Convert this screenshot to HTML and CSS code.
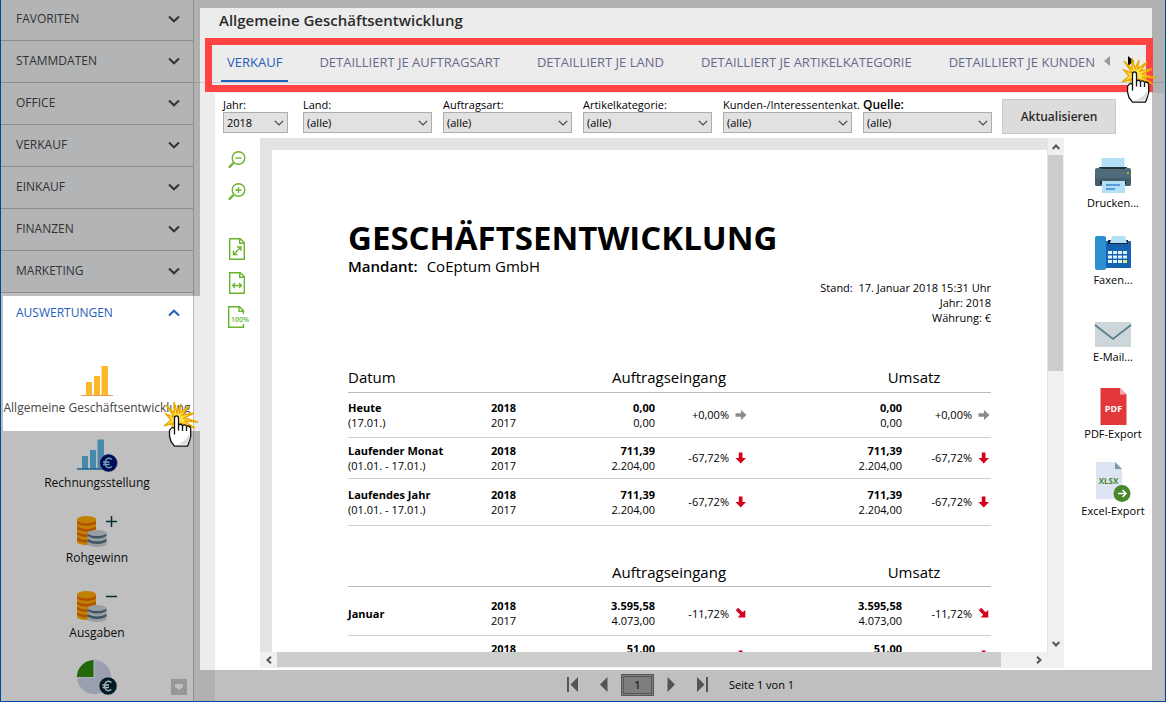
FILE: index.html
```html
<!DOCTYPE html>
<html lang="de">
<head>
<meta charset="utf-8">
<title>Allgemeine Geschäftsentwicklung</title>
<link rel="stylesheet" href="styles.css">
</head>
<body>
<svg class="defs" aria-hidden="true">
  <symbol id="chevron" viewBox="0 0 12 8"><path d="M1 1.5L6 6.3L11 1.5" fill="none" stroke="currentColor" stroke-width="2"/></symbol>
  <symbol id="caret" viewBox="0 0 10 6"><path d="M.8.8L5 5L9.200.8" fill="none" stroke="currentColor" stroke-width="1.200"/></symbol>
  <symbol id="tick" viewBox="0 0 8 6"><path d="M.7 5L4 1.500L7.300 5" fill="none" stroke="currentColor" stroke-width="2"/></symbol>
  <symbol id="coins" viewBox="0 0 30 31">
    <path d="M0 3v23a9.500 3 0 0 0 19 0V3z" fill="#ffae08"/>
    <path d="M0 5q9.500 5 19 0v2.600q-9.500 5-19 0zM0 10.500q9.500 5 19 0v2.600q-9.500 5-19 0zM0 16q9.500 5 19 0v2.600q-9.500 5-19 0zM0 21.500q9.500 5 19 0v2.600q-9.500 5-19 0z" fill="#ef6a00"/>
    <ellipse cx="9.500" cy="3" rx="9.500" ry="3" fill="#ffae08"/>
    <path d="M10.500 17v11a9.500 3 0 0 0 19 0V17z" fill="#c8d3da"/>
    <path d="M10.500 17.500q9.500 5 19 0v2.600q-9.500 5-19 0zM10.500 23q9.500 5 19 0v2.600q-9.500 5-19 0z" fill="#527182"/>
    <ellipse cx="20" cy="17" rx="9.500" ry="3" fill="#c8d3da"/>
  </symbol>
  <symbol id="arrow-flat" viewBox="0 0 12 12"><path d="M.5 4.200H6V1l5.500 5L6 11V7.800H.5z" fill="#8a8a8a"/></symbol>
  <symbol id="arrow-down" viewBox="0 0 12 12"><path d="M3.800.5h3.700V6H11L5.700 11.500.5 6h3.300z" fill="#d6001c"/></symbol>
  <symbol id="arrow-slope" viewBox="0 0 12 12"><path d="M3.200.8L7.600 5.200 10.300 3v7.500H2.800L5.200 7.700.8 3.200z" fill="#d6001c"/></symbol>
  <symbol id="pointer" viewBox="0 0 38 48">
    <path d="M14 18L5 5L13 13L13 2L16 13L20 4L18.500 13L28 6L21 15L33 13L23 18L37 22L23 21L34 28L20 23L10 31L12 23L3 26L10 20L5 14L13 17z" fill="#ffe14d" stroke="#eda900" stroke-width="1.400"/>
    <path d="M13.500 34V18q0-2.200 2-2.200t2 2.200v7q2.200-1.800 4 .6 2.200-1.600 4 .6 3.500-.8 4.200 2.200v8l-1.400 5-1.800 4.800H13.500L10 41.500 8.500 36v-5.500q2.500-4.500 5-2z" fill="#fff" stroke="#111" stroke-width="1.300" stroke-linejoin="round"/>
    <path d="M17.500 25v5.500M21.500 25.500V31M25.500 26.500V31" stroke="#111" stroke-width="1.300" fill="none"/>
    <path d="M28.500 34v5l-3 5.500H15q8-1 13.500-10.500z" fill="#ddd"/>
  </symbol>
</svg>

<div class="app">
  <nav class="sidebar" aria-label="Hauptmenü">
    <button class="section">FAVORITEN<svg><use href="#chevron"/></svg></button>
    <button class="section">STAMMDATEN<svg><use href="#chevron"/></svg></button>
    <button class="section">OFFICE<svg><use href="#chevron"/></svg></button>
    <button class="section">VERKAUF<svg><use href="#chevron"/></svg></button>
    <button class="section">EINKAUF<svg><use href="#chevron"/></svg></button>
    <button class="section">FINANZEN<svg><use href="#chevron"/></svg></button>
    <button class="section">MARKETING<svg><use href="#chevron"/></svg></button>
    <button class="section open">AUSWERTUNGEN<svg><use href="#chevron"/></svg></button>
    <div class="reports">
      <a class="report-link current" href="#">
        <svg width="42" height="36" viewBox="0 0 42 36"><path d="M10 19h6v13h-6zM18 13h6v19h-6zM25.500 3H32v29h-6.500z" fill="#fdb72b"/><path d="M5 32.500h32" stroke="#ee9a4d"/></svg>
        <span>Allgemeine Geschäftsentwicklung</span></a>
      <a class="report-link" href="#">
        <svg width="42" height="36" viewBox="0 0 42 36"><path d="M6 18h6v13H6zM14 12h6v19h-6zM21.500 1.500H28V31h-6.500z" fill="#5fb8e6"/><path d="M1 31h28" stroke="#2484b8" stroke-width="1.500"/><circle cx="32.500" cy="25" r="9" fill="#000f75" stroke="#d0dcec" stroke-width=".6"/><path d="M36 21.500q-4.500-3-6.500 1.200-1 2.300 0 4.600 2 4.200 6.500 1.200M27 24h6.500M27 26.500h6.500" fill="none" stroke="#9be0fa" stroke-width="1.300"/></svg>
        <span>Rechnungsstellung</span></a>
      <a class="report-link" href="#">
        <svg width="42" height="36" viewBox="0 0 42 36"><use href="#coins" x="1" y="3" width="30" height="31"/><path d="M30 8.500h11M35.500 3v11" stroke="#0b3947" stroke-width="1.500"/></svg>
        <span>Rohgewinn</span></a>
      <a class="report-link" href="#">
        <svg width="42" height="36" viewBox="0 0 42 36"><use href="#coins" x="1" y="3" width="30" height="31"/><path d="M30 8.500h11" stroke="#0b3947" stroke-width="1.500"/></svg>
        <span>Ausgaben</span></a>
      <a class="report-link" href="#" aria-label="Weitere Auswertung">
        <svg width="42" height="36" viewBox="0 0 42 36"><circle cx="18" cy="14" r="17" fill="#ccd5e8"/><path d="M18-4v18H0" fill="none" stroke="#e6ebf5" stroke-width="2"/><path d="M17.500-3v17H1A17 17 0 0 1 17.500-3z" fill="#2f8a0c"/><circle cx="32" cy="23" r="9" fill="#062532" stroke="#d0dcec" stroke-width=".6"/><path d="M35.500 19.500q-4.500-3-6.500 1.200-1 2.300 0 4.600 2 4.200 6.500 1.200M26.500 22h6.500M26.500 24.500H33" fill="none" stroke="#e8f4fa" stroke-width="1.300"/></svg></a>
    </div>
    <button class="more" aria-label="Mehr"><svg width="8" height="6" viewBox="0 0 8 6"><path d="M0 0h8v3L4 6 0 3z" fill="#fff"/></svg></button>
  </nav>

  <main class="main">
    <header class="head">
      <h1>Allgemeine Geschäftsentwicklung</h1>
      <div class="tabbar">
        <div class="tabs" role="tablist">
          <button class="tab active" role="tab" aria-selected="true">VERKAUF</button>
          <button class="tab" role="tab">DETAILLIERT JE AUFTRAGSART</button>
          <button class="tab" role="tab">DETAILLIERT JE LAND</button>
          <button class="tab" role="tab">DETAILLIERT JE ARTIKELKATEGORIE</button>
          <button class="tab" role="tab">DETAILLIERT JE KUNDEN</button>
        </div>
        <div class="tab-scroll">
          <button aria-label="Zurück"><svg width="6" height="10" viewBox="0 0 6 10"><path d="M6 0v10L0 5z" fill="#999"/></svg></button>
          <button aria-label="Weiter"><svg width="6" height="10" viewBox="0 0 6 10"><path d="M0 0v10l6-5z" fill="#000"/></svg></button>
        </div>
      </div>
    </header>

    <div class="panel">
      <form class="filters">
        <div class="field year"><label for="f1">Jahr:</label><div class="pick"><select id="f1"><option>2018</option></select><svg><use href="#caret"/></svg></div></div>
        <div class="field"><label for="f2">Land:</label><div class="pick"><select id="f2"><option>(alle)</option></select><svg><use href="#caret"/></svg></div></div>
        <div class="field"><label for="f3">Auftragsart:</label><div class="pick"><select id="f3"><option>(alle)</option></select><svg><use href="#caret"/></svg></div></div>
        <div class="field"><label for="f4">Artikelkategorie:</label><div class="pick"><select id="f4"><option>(alle)</option></select><svg><use href="#caret"/></svg></div></div>
        <div class="field"><label for="f5">Kunden-/Interessentenkat.</label><div class="pick"><select id="f5"><option>(alle)</option></select><svg><use href="#caret"/></svg></div></div>
        <div class="field"><label class="strong" for="f6">Quelle:</label><div class="pick"><select id="f6"><option>(alle)</option></select><svg><use href="#caret"/></svg></div></div>
        <button class="refresh" type="button">Aktualisieren</button>
      </form>

      <div class="work">
        <div class="zoombar">
          <button aria-label="Verkleinern"><svg width="24" height="20" viewBox="0 0 24 20"><circle cx="13.500" cy="8" r="6.300" fill="none" stroke="#6ab42d" stroke-width="1.400"/><path d="M8.500 13L4 17.500" stroke="#6ab42d" stroke-width="2.400"/><path d="M10.500 8h6" stroke="#6ab42d" stroke-width="1.300"/></svg></button>
          <button aria-label="Vergrößern"><svg width="24" height="20" viewBox="0 0 24 20"><circle cx="13.500" cy="8" r="6.300" fill="none" stroke="#6ab42d" stroke-width="1.400"/><path d="M8.500 13L4 17.500" stroke="#6ab42d" stroke-width="2.400"/><path d="M10.500 8h6M13.500 5v6" stroke="#6ab42d" stroke-width="1.300"/></svg></button>
          <button class="fit" aria-label="Ganze Seite"><svg width="24" height="22" viewBox="0 0 24 22"><path d="M4.700.7h10.600l4 4v16.600H4.700zM14.700.7v4.500h4.600" fill="none" stroke="#6ab42d" stroke-width="1.400"/><path d="M9 16l6.500-6.500M11.800 9H16v4M8.500 12.500v4h4" fill="none" stroke="#6ab42d" stroke-width="1.300"/></svg></button>
          <button aria-label="Seitenbreite"><svg width="24" height="22" viewBox="0 0 24 22"><path d="M4.700.7h10.600l4 4v16.600H4.700zM14.700.7v4.500h4.600" fill="none" stroke="#6ab42d" stroke-width="1.400"/><path d="M7.500 13.500h9M10 11l-2.500 2.500L10 16M14 11l2.500 2.500L14 16" fill="none" stroke="#6ab42d" stroke-width="1.300"/></svg></button>
          <button aria-label="100 Prozent"><svg width="24" height="22" viewBox="0 0 24 22"><path d="M18.500 8V4.500L14.500.7H3.700v20.600h14.800V18M14 .7v4.500h4.500" fill="none" stroke="#6ab42d" stroke-width="1.400"/><text x="6" y="16" class="pct-icon">100%</text></svg></button>
        </div>

        <div class="viewer">
          <div class="canvas">
            <article class="page">
              <h2>GESCHÄFTSENTWICKLUNG</h2>
              <p class="client"><b>Mandant:</b><span>CoEptum GmbH</span></p>
              <div class="meta"><p>Stand: &nbsp;17. Januar 2018 15:31 Uhr</p><p>Jahr: 2018</p><p>Währung: €</p></div>
              <table>
                <colgroup><col class="c-date"><col class="c-year"><col class="c-a1"><col class="c-p1"><col class="c-i1"><col class="c-gap"><col class="c-a2"><col class="c-p2"><col class="c-i2"></colgroup>
                <thead><tr><th class="left" colspan="2">Datum</th><th colspan="3">Auftragseingang</th><th></th><th colspan="3">Umsatz</th></tr></thead>
                <tbody>
                  <tr class="r1"><td><b>Heute</b><br>(17.01.)</td><td><b>2018</b><br>2017</td><td class="num"><b>0,00</b><br>0,00</td><td class="num">+0,00%</td><td class="ico"><svg><use href="#arrow-flat"/></svg></td><td></td><td class="num"><b>0,00</b><br>0,00</td><td class="num">+0,00%</td><td class="ico"><svg><use href="#arrow-flat"/></svg></td></tr>
                  <tr class="r2"><td><b>Laufender Monat</b><br>(01.01. - 17.01.)</td><td><b>2018</b><br>2017</td><td class="num"><b>711,39</b><br>2.204,00</td><td class="num">-67,72%</td><td class="ico"><svg><use href="#arrow-down"/></svg></td><td></td><td class="num"><b>711,39</b><br>2.204,00</td><td class="num">-67,72%</td><td class="ico"><svg><use href="#arrow-down"/></svg></td></tr>
                  <tr class="r3"><td><b>Laufendes Jahr</b><br>(01.01. - 17.01.)</td><td><b>2018</b><br>2017</td><td class="num"><b>711,39</b><br>2.204,00</td><td class="num">-67,72%</td><td class="ico"><svg><use href="#arrow-down"/></svg></td><td></td><td class="num"><b>711,39</b><br>2.204,00</td><td class="num">-67,72%</td><td class="ico"><svg><use href="#arrow-down"/></svg></td></tr>
                </tbody>
              </table>
              <table class="months">
                <colgroup><col class="c-date"><col class="c-year"><col class="c-a1"><col class="c-p1"><col class="c-i1"><col class="c-gap"><col class="c-a2"><col class="c-p2"><col class="c-i2"></colgroup>
                <thead><tr><th colspan="2"></th><th colspan="3">Auftragseingang</th><th></th><th colspan="3">Umsatz</th></tr></thead>
                <tbody>
                  <tr class="r4"><td><b>Januar</b></td><td><b>2018</b><br>2017</td><td class="num"><b>3.595,58</b><br>4.073,00</td><td class="num">-11,72%</td><td class="ico"><svg><use href="#arrow-slope"/></svg></td><td></td><td class="num"><b>3.595,58</b><br>4.073,00</td><td class="num">-11,72%</td><td class="ico"><svg><use href="#arrow-slope"/></svg></td></tr>
                  <tr class="r2 cut"><td></td><td><b>2018</b></td><td class="num"><b>51,00</b></td><td></td><td class="ico"><svg><use href="#arrow-down"/></svg></td><td></td><td class="num"><b>51,00</b></td><td></td><td class="ico"><svg><use href="#arrow-down"/></svg></td></tr>
                </tbody>
              </table>
            </article>
          </div>
          <div class="vbar"><span class="arrow"><svg><use href="#tick"/></svg></span><span class="thumb"></span><span class="rest"></span><span class="arrow down"><svg><use href="#tick"/></svg></span></div>
          <div class="hbar"><span class="arrow prev"><svg><use href="#tick"/></svg></span><span class="thumb"></span><span class="rest"></span><span class="arrow next"><svg><use href="#tick"/></svg></span></div>
        </div>

        <div class="exports">
          <button><svg width="38" height="38" viewBox="0 0 38 38"><path d="M7.500 1h23v12h-23z" fill="#b3dff7"/><path d="M5 10h28v4H5z" fill="#263238"/><path d="M1 13q0-2 2-2h4v1h24v-1h4q2 0 2 2v14q0 2-2 2H3q-2 0-2-2z" fill="#4f6b79"/><path d="M1 21h36v6q0 2-2 2H3q-2 0-2-2z" fill="#455d69"/><path d="M6 24h26v3H6z" fill="#1f2b31"/><path d="M8 24h23v12H8z" fill="#b3dff7"/><path d="M12 28h14M12 32h9" stroke="#3d87c9" stroke-width="1.500"/><path d="M33 15h2v2h-2z" fill="#8bc926"/></svg><span>Drucken...</span></button>
          <button><svg width="38" height="38" viewBox="0 0 38 38"><path d="M10 7h26q1 0 1 1v25q0 1-1 1H10z" fill="#1562b0"/><path d="M14 6h20v4H14z" fill="#10253c"/><path d="M18 2h13l2 7H16z" fill="#b3dff7"/><rect x="1" y="2" width="11" height="34" rx="2" fill="#2e8fd0"/><path d="M14 17h4v3h-4zM19 17h4v3h-4zM24 17h4v3h-4zM29 17h4v3h-4zM14 21.500h4v3h-4zM19 21.500h4v3h-4zM24 21.500h4v3h-4zM29 21.500h4v3h-4zM14 26h4v3h-4zM19 26h4v3h-4zM24 26h4v3h-4z" fill="#e3f2fb"/><path d="M29 26h4v3h-4z" fill="#e8ee79"/></svg><span>Faxen...</span></button>
          <button><svg width="38" height="38" viewBox="0 0 38 38"><path d="M1 11h36v25H1z" fill="#cdd7db"/><path d="M1 14l18 14 18-14" fill="none" stroke="#557c8b" stroke-width="1.600"/></svg><span>E-Mail...</span></button>
          <button><svg width="38" height="38" viewBox="0 0 38 38"><path d="M6.500 0H26l6.500 6.500V37h-26z" fill="#e2373b"/><path d="M26 0v6.500h6.500z" fill="#f3a9aa"/><text x="19.500" y="24" class="pdf-icon">PDF</text></svg><span>PDF-Export</span></button>
          <button><svg width="38" height="38" viewBox="0 3 38 38"><path d="M2 0h19l7 7v30H2z" fill="#dce4f2"/><path d="M21 0v7h7z" fill="#7c9aa9"/><text x="14.500" y="22" class="xls-icon">XLSX</text><circle cx="28" cy="31.500" r="8.500" fill="#48872a"/><path d="M24 31.500h7.500M28.500 28l3.500 3.500-3.500 3.500" fill="none" stroke="#fff" stroke-width="1.500"/></svg><span>Excel-Export</span></button>
        </div>
      </div>

      <footer class="pager">
        <button aria-label="Erste Seite"><svg width="12" height="16" viewBox="0 0 12 16"><path d="M0 0h2v15H0zM11 0v15L3.500 7.500z" fill="#707070"/></svg></button>
        <button aria-label="Vorherige Seite"><svg width="8" height="16" viewBox="0 0 8 16"><path d="M7.500 0v15L0 7.500z" fill="#707070"/></svg></button>
        <button class="page-no">1</button>
        <button aria-label="Nächste Seite"><svg width="8" height="16" viewBox="0 0 8 16"><path d="M.5 0v15L8 7.500z" fill="#707070"/></svg></button>
        <button class="last" aria-label="Letzte Seite"><svg width="12" height="16" viewBox="0 0 12 16"><path d="M10 0h2v15h-2zM1 0v15l7.500-7.500z" fill="#707070"/></svg></button>
        <span>Seite 1 von 1</span>
      </footer>
    </div>
  </main>
  <div class="shade"></div>
  <div class="frame"></div>
  <svg class="pointer on-nav"><use href="#pointer"/></svg>
  <svg class="pointer on-tabs"><use href="#pointer"/></svg>
</div>
</body>
</html>
```
FILE: styles.css
```css
* { box-sizing: border-box; }
body { margin: 0; font: 12px/16px "Open Sans", "Noto Sans", sans-serif; color: #000; }
button { font: inherit; color: inherit; background: none; border: 0; padding: 0; display: block; }
svg { display: block; flex: none; }
h1, h2, p { margin: 0; }
.defs { position: absolute; width: 0; height: 0; }

.app { position: relative; height: 100vh; display: flex; overflow: hidden; border: 1px solid #0060d0; border-top: 0; background: #ececec; }

/* Sidebar */
.sidebar { position: relative; width: 193px; flex: none; display: flex; flex-direction: column; overflow: hidden; background: #fff; border-right: 1px solid #bdbdbd; }
.section { flex: none; display: flex; justify-content: space-between; align-items: center; height: 42px; padding: 0 13px 2px 15px; background: #eff1f3; border-bottom: 1px solid #bdbdbd; color: #454545; text-align: left; }
.section:first-child { height: 41px; }
.section svg { width: 12px; height: 8px; }
.section.open { background: #fff; border-color: #fff; color: #2460b9; }
.section.open svg { transform: rotate(180deg); }
.reports { flex: none; padding-top: 28px; display: flex; flex-direction: column; align-items: stretch; }
.report-link { height: 75px; display: flex; flex-direction: column; align-items: center; gap: 1px; color: #111; text-decoration: none; white-space: nowrap; }
.report-link svg { overflow: visible; }
.report-link.current { color: #454545; }
.more { position: absolute; right: 6px; bottom: 6px; width: 16px; height: 16px; background: #cacaca; display: grid; place-items: center; }

/* Header and tabs */
.main { flex: 1; min-width: 0; display: flex; flex-direction: column; padding-right: 1px; }
.head { height: 93px; flex: none; padding-top: 10px; }
h1 { font-size: 15px; line-height: 20px; font-weight: 600; color: #2b2b2b; padding-left: 25px; }
.tabbar { display: flex; height: 53px; border-bottom: 1px solid #cfcfcf; padding-left: 27px; }
.tabs { display: flex; gap: 25px; padding-top: 14px; }
.tab { padding: 0 6px; font-size: 13px; color: #69698a; border-bottom: 2px solid transparent; white-space: nowrap; }
.tab.active { color: #2460b9; border-color: #2460b9; }
.tab-scroll { margin-left: auto; display: flex; gap: 18px; padding: 26px 30px 0 0; align-items: flex-start; }

/* Filters */
.panel { flex: 1; min-height: 0; display: flex; flex-direction: column; background: #fff; margin-left: 21px; }
.filters { flex: none; height: 45px; display: flex; gap: 11px; padding: 4px 0 0 8px; font-size: 11px; }
.field { width: 129px; flex: none; }
.field.year { width: 65px; margin-right: 4px; }
.field label { display: block; line-height: 15px; white-space: nowrap; }
.field .strong { font-size: 12px; font-weight: 600; }
.pick { position: relative; }
.pick select { display: block; width: 100%; height: 21px; appearance: none; background: #e1e1e1; border: 1px solid #adadad; border-radius: 0; padding: 0 20px 0 3px; font: inherit; color: #000; }
.pick svg { position: absolute; right: 4px; top: 8px; width: 10px; height: 6px; color: #444; }
.refresh { width: 114px; height: 35px; margin: 2px 0 0 -1px; background: #dcdcdc; border: 1px solid #c9c9c9; font-size: 12px; font-weight: 600; color: #2b2b2b; }

/* Work area */
.work { flex: 1; min-height: 0; display: flex; padding-bottom: 2px; }
.zoombar { width: 45px; flex: none; display: flex; flex-direction: column; align-items: center; gap: 12px; padding: 12px 1px 0 0; }
.zoombar .fit { margin-top: 24px; }
.zoombar svg { overflow: visible; }
.pct-icon { font: 600 7px "Open Sans", sans-serif; fill: #6ab42d; }
.viewer { flex: 1; min-width: 0; display: grid; grid-template: minmax(0, 1fr) 16px / minmax(0, 1fr) 16px; }
.canvas { overflow: hidden; background: #e4e4e4; padding: 12px 1px 0 12px; }
.page { background: #fff; min-height: 100%; padding: 64px 56px 0 76px; font-size: 11px; line-height: 15px; }
.page h2 { font-size: 33px; line-height: 48px; font-weight: 700; white-space: nowrap; }
.client { display: flex; gap: 9px; font-size: 15px; line-height: 20px; margin-top: -6px; }
.client b { font-weight: 600; }
.meta { text-align: right; margin-top: 4px; }
table { width: 100%; table-layout: fixed; border-collapse: collapse; margin-top: 38px; }
th { height: 29px; font-size: 15px; font-weight: 400; line-height: 20px; padding: 0; text-align: center; border-bottom: 1px solid #b9b9b9; }
th.left { text-align: left; }
td { padding: 0; white-space: nowrap; border-bottom: 1px solid #cfcfcf; }
.c-date { width: 143px; } .c-year { width: 91px; } .c-a1 { width: 73px; } .c-p1 { width: 74px; } .c-i1 { width: 27px; }
.c-gap { width: 81px; } .c-a2 { width: 65px; } .c-p2 { width: 70px; } .c-i2 { width: 19px; }
.num { text-align: right; }
.ico { padding-left: 6px; }
.ico svg { width: 12px; height: 12px; }
.r1 { height: 45px; } .r2 { height: 41px; } .r3 { height: 47px; } .r4 { height: 49px; }
.r4 td { padding-top: 4px; }
.cut td { vertical-align: top; padding-top: 5px; }
.cut .ico { vertical-align: middle; padding-top: 0; }
.months { margin-top: 32px; }

.vbar, .hbar { background: #f0f0f0; display: flex; color: #555; }
.vbar { flex-direction: column; padding-right: 1px; }
.hbar { grid-column: 1 / 3; padding-right: 17px; }
.thumb { background: #cdcdcd; }
.rest { flex: 1; }
.vbar .thumb { height: 42%; } .hbar .thumb { flex: 0 0 92%; margin-bottom: 1px; }
.arrow { flex: none; width: 16px; height: 17px; display: grid; place-items: center; }
.hbar .arrow { height: 15px; width: 17px; }
.arrow svg { width: 8px; height: 6px; }
.down svg { transform: rotate(180deg); }
.prev svg { transform: rotate(-90deg); }
.next svg { transform: rotate(90deg); }

.exports { width: 100px; flex: none; display: flex; flex-direction: column; padding: 19px 2px 0 0; gap: 19px; font-size: 11px; }
.exports button { display: flex; flex-direction: column; align-items: center; height: 58px; }
.exports svg { overflow: visible; }
.pdf-icon, .xls-icon { font: 700 9px "Open Sans", sans-serif; text-anchor: middle; fill: #fff; }
.xls-icon { font-size: 8px; fill: #48872a; }

.pager { flex: none; height: 31px; display: flex; align-items: center; gap: 21px; padding: 0 0 2px 352px; font-size: 11px; }
.page-no { width: 33px; height: 22px; margin: 0 -8px; background: #a8a8a8; border: 3px double #747474; font-weight: 600; color: #333; }

/* Spotlight, highlight frame and pointers */
.shade { position: fixed; inset: 0; z-index: 2; pointer-events: none; background: rgba(0, 0, 0, .25);
  clip-path: polygon(evenodd, 0 0, 100% 0, 100% 100%, 0 100%, 0 0, 200px 8px, calc(100% - 14px) 8px, calc(100% - 14px) calc(100% - 32px), 200px calc(100% - 32px), 200px 431px, 3px 431px, 3px 296px, 200px 296px, 200px 8px, 0 0); }
.frame { position: absolute; z-index: 3; left: 204px; right: 12px; top: 38px; height: 54px; border: 7px solid #ff4343; pointer-events: none; }
.pointer { position: absolute; z-index: 4; width: 38px; height: 48px; pointer-events: none; }
.on-nav { left: 160px; top: 400px; }
.on-tabs { right: 8px; top: 56px; }
```
